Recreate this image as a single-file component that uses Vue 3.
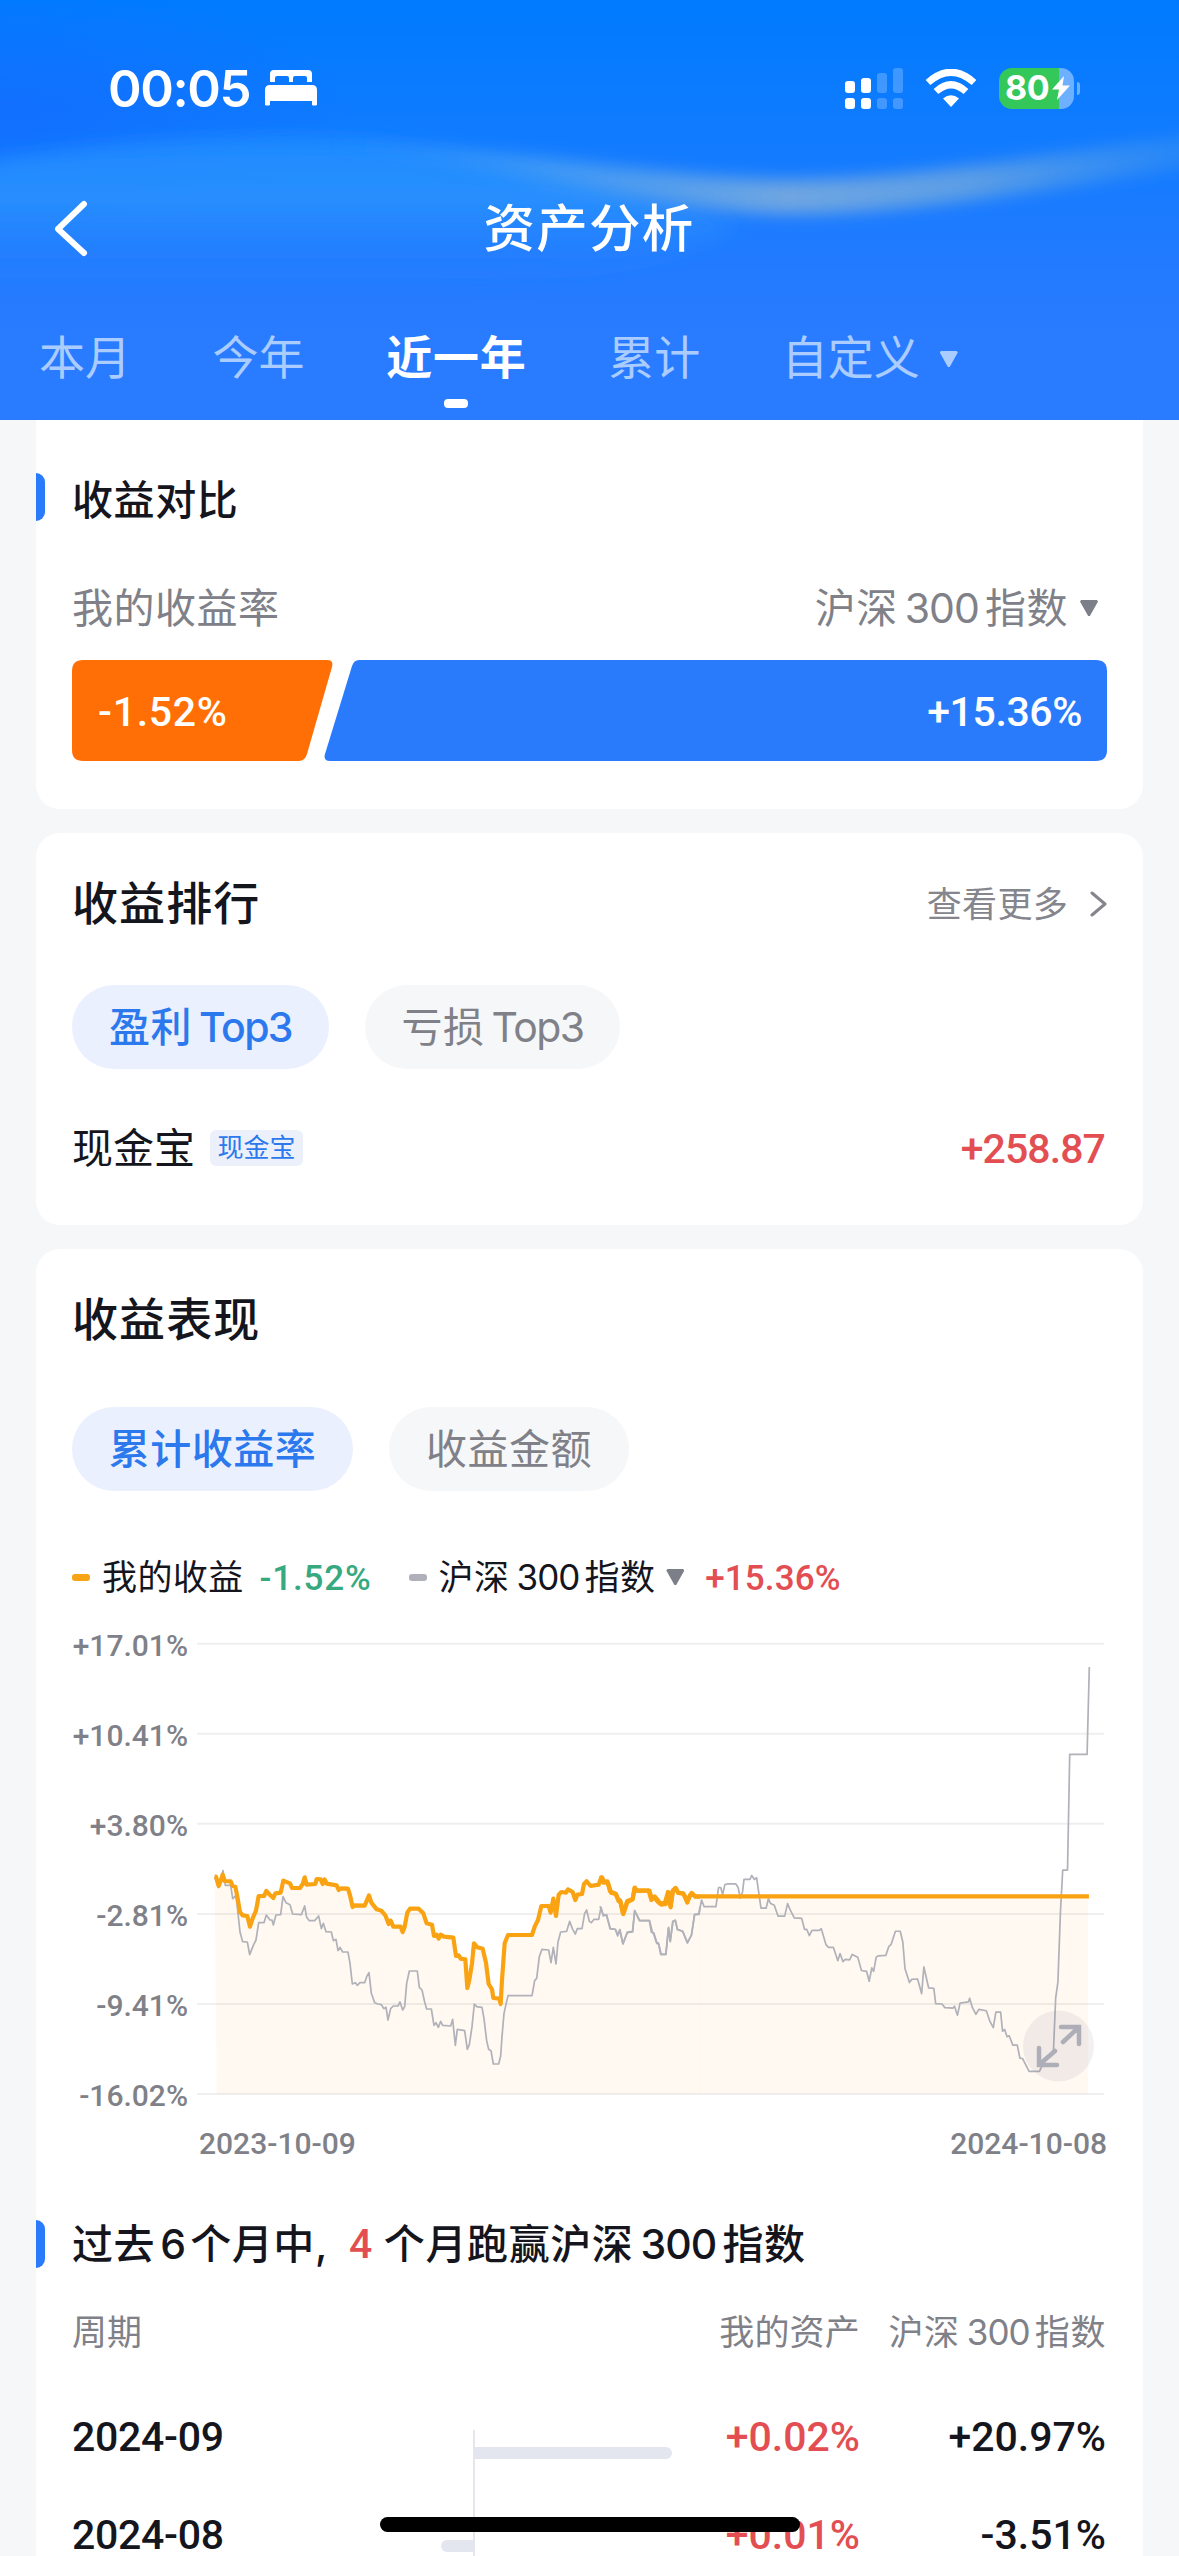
<script setup>
const tabs = [
  { label: '本月' },
  { label: '今年' },
  { label: '近一年', active: true },
  { label: '累计' },
  { label: '自定义', menu: true },
]

const gridRows = ['+17.01%', '+10.41%', '+3.80%', '-2.81%', '-9.41%', '-16.02%']

// First half of the year, in thirds of a pixel.
const mineEarly =
  '44,290 48,290 56,318 62,302 68,284 74,303 92,304 98,318 106,320 112,350 120,396 128,406 142,408 150,440 158,415 168,392 176,348 192,348 199,333 210,345 220,354 226,340 242,338 250,302 270,310 276,324 300,324 308,312 314,292 320,314 346,312 350,297 362,298 368,312 374,298 380,311 410,316 416,330 424,325 444,326 450,346 458,381 464,376 494,377 507,346 514,368 530,388 544,392 556,406 566,432 572,422 580,440 602,440 608,456 614,440 622,398 630,386 656,386 670,400 680,430 696,434 702,468 710,464 716,476 722,464 732,470 760,473 768,528 776,526 782,536 796,538 802,624 808,600 816,550 822,490 832,502 848,506 858,548 866,612 876,628 880,654 898,656 902,672 906,600 914,490 924,465 996,465 1004,440 1014,420 1024,378 1046,378 1052,398 1060,356 1068,408 1076,344 1084,336 1098,338 1104,328 1118,336 1126,360 1132,344 1146,342 1152,312 1160,304 1172,318 1196,314 1204,292 1210,308 1222,304 1230,334 1248,342 1256,364 1262,366 1270,402 1282,366 1298,358 1304,324 1310,332 1346,332 1354,360 1362,352 1374,366 1384,374 1398,372 1406,338 1412,382 1418,332 1426,324 1434,338 1450,340 1462,368 1470,345 1478,342 1486,350 1500,350'
const indexEarly =
  '44,290 56,322 62,304 69,272 76,316 92,316 98,356 108,346 114,400 120,456 128,485 142,486 149,524 160,496 168,480 176,428 192,428 199,405 210,420 216,420 220,435 228,405 242,404 249,350 258,368 270,374 278,402 304,404 314,378 320,412 328,422 344,422 356,408 364,446 370,430 378,455 394,456 400,482 408,478 414,512 420,502 428,516 444,516 450,550 457,612 466,608 472,616 480,608 494,608 500,590 507,578 514,640 524,668 534,672 544,674 552,686 558,682 564,720 572,686 580,678 594,678 600,666 608,690 614,680 620,610 628,573 652,573 658,622 666,630 674,666 680,687 694,687 702,736 708,728 715,742 722,724 728,736 752,738 758,718 766,796 772,748 794,752 802,808 808,794 816,740 823,672 830,680 846,682 852,716 860,782 866,808 873,812 880,852 896,852 902,828 906,770 912,700 924,647 996,647 1004,602 1010,595 1018,530 1026,508 1046,510 1053,548 1060,502 1068,552 1074,486 1082,456 1100,454 1109,424 1118,448 1126,462 1132,446 1146,446 1154,400 1160,390 1168,424 1174,428 1182,418 1196,418 1203,382 1210,408 1220,404 1230,446 1246,448 1253,468 1259,450 1269,492 1282,458 1298,456 1304,392 1318,422 1348,422 1354,456 1360,460 1370,490 1376,492 1382,523 1398,523 1405,444 1411,485 1418,424 1426,422 1432,448 1448,454 1462,488 1474,466 1484,404 1497,403 1500,380'

// Second half: 2.708 units across and 2.24 units down per pixel.
const mineLate =
  '0,848 6,846 12,856 22,858 30,880 42,882 50,896 54,896 62,926 74,898 88,894 94,868 100,875 134,875 140,892 148,888 164,904 176,902 184,878 191,910 198,874 206,870 212,880 226,882 237,898 248,880 258,888 1324,888'
const indexLate =
  '0,910 8,928 18,932 28,960 42,962 48,974 54,962 62,994 74,968 88,966 94,920 108,942 134,942 142,968 146,970 154,992 158,992 166,1018 178,1018 186,957 190,988 198,944 204,941 210,962 224,966 237,992 248,974 256,928 268,927 275,896 282,911 314,911 321,868 327,868 332,884 338,862 344,860 368,860 374,868 380,892 386,878 390,850 406,850 411,841 418,850 424,846 436,914 450,914 456,893 462,904 472,908 482,932 500,932 508,904 516,920 526,936 546,937 554,962 560,962 567,976 574,964 594,964 599,960 612,996 618,1002 632,1002 644,1032 650,1016 658,1034 664,1029 676,1030 683,1018 698,1024 708,1054 722,1056 729,1078 736,1048 741,1056 748,1024 754,1021 774,1020 782,1000 788,996 800,966 813,966 820,990 826,1050 838,1081 844,1074 860,1073 871,1106 877,1046 890,1093 904,1094 909,1128 926,1129 934,1137 956,1138 960,1134 968,1154 975,1127 998,1124 1001,1116 1008,1136 1018,1152 1026,1141 1046,1144 1056,1168 1065,1182 1072,1147 1085,1147 1090,1190 1096,1186 1102,1202 1108,1200 1118,1221 1130,1221 1137,1250 1144,1251 1162,1280 1190,1280 1200,1262 1228,1232 1234,1115 1240,1080 1247,920 1253,829 1266,829 1272,570 1319,570 1325,374'

const months = [
  { period: '2024-09', mine: '+0.02%', index: '+20.97%', side: 'gain', width: 197 },
  { period: '2024-08', mine: '+0.01%', index: '-3.51%', side: 'loss', width: 34 },
]
</script>

<template>
  <div class="screen">
    <header class="hero">
      <svg class="hero-art" viewBox="0 0 1179 420" preserveAspectRatio="none">
        <defs>
          <linearGradient id="base" x1="0" y1="0" x2="0" y2="1">
            <stop offset="0" stop-color="#007bff" />
            <stop offset="0.35" stop-color="#127bff" />
            <stop offset="0.65" stop-color="#237bff" />
            <stop offset="0.8" stop-color="#297bff" />
            <stop offset="1" stop-color="#297bff" />
          </linearGradient>
          <radialGradient id="corner">
            <stop offset="0" stop-color="#126eff" stop-opacity="0.9" />
            <stop offset="1" stop-color="#126eff" stop-opacity="0" />
          </radialGradient>
          <linearGradient id="sheet" x1="0" y1="0" x2="0" y2="1">
            <stop offset="0" stop-color="#2493ff" stop-opacity="0.65" />
            <stop offset="0.4" stop-color="#2d96fd" stop-opacity="0.75" />
            <stop offset="1" stop-color="#277dff" stop-opacity="0" />
          </linearGradient>
          <linearGradient id="ribbon" x1="0" y1="0" x2="1" y2="0">
            <stop offset="0" stop-color="#3a9bf8" stop-opacity="0" />
            <stop offset="0.25" stop-color="#4a9ff3" stop-opacity="0.8" />
            <stop offset="0.5" stop-color="#70a6e1" />
            <stop offset="0.7" stop-color="#5c9ee6" />
            <stop offset="1" stop-color="#3592f2" stop-opacity="0.3" />
          </linearGradient>
          <filter id="soft" x="-10%" y="-30%" width="120%" height="160%"><feGaussianBlur stdDeviation="8" /></filter>
          <filter id="softer" x="-10%" y="-30%" width="120%" height="160%"><feGaussianBlur stdDeviation="9" /></filter>
        </defs>
        <rect width="1179" height="420" fill="url(#base)" />
        <ellipse cx="20" cy="110" rx="330" ry="120" fill="url(#corner)" />
        <path d="M-40 165 Q180 128 370 140 Q560 165 740 225 Q640 290 400 290 L-40 290Z" fill="url(#sheet)" filter="url(#softer)" />
        <path d="M330 140 C480 142 640 176 780 180 C920 180 1060 152 1240 128 L1240 158 C1060 188 900 216 780 214 C640 210 520 166 330 146Z" fill="url(#ribbon)" filter="url(#soft)" />
      </svg>

      <div class="status">
        <div class="clock">
          <span class="time">00:05</span>
          <svg width="52" height="36" viewBox="0 0 52 36" fill="#fff">
            <path d="M5 12V4Q5 0 9 0H43Q47 0 47 4V12H42V8Q42 6 40 6H30Q28 6 28 8V12H24V8Q24 6 22 6H12Q10 6 10 8V12Z" />
            <path d="M0 35V20Q0 15 5 15H47Q52 15 52 20V35Q49 36 47 35V31H5V35Q2 36 0 35Z" />
          </svg>
        </div>
        <div class="signals">
          <svg width="58" height="41" viewBox="0 0 58 41" fill="#fff">
            <rect y="13" width="10" height="12" rx="3" /><rect y="30" width="10" height="11" rx="3" />
            <rect x="16" y="10" width="10" height="15" rx="3" /><rect x="16" y="30" width="10" height="11" rx="3" />
            <g opacity="0.22">
              <rect x="32" y="5" width="10" height="20" rx="3" /><rect x="32" y="30" width="10" height="11" rx="3" />
              <rect x="48" y="0" width="10" height="25" rx="3" /><rect x="48" y="30" width="10" height="11" rx="3" />
            </g>
          </svg>
          <svg width="52" height="38" viewBox="0 0 52 38">
            <g fill="none" stroke="#fff" stroke-width="7">
              <path d="M3 13.5Q26 -7 49 13.5" /><path d="M11 22.5Q26 9 41 22.5" />
            </g>
            <path d="M18 29.5Q26 23 34 29.5L26 38Z" fill="#fff" />
          </svg>
          <div class="battery">
            <div class="cell">
              <span class="level">80</span>
              <svg width="18" height="24" viewBox="0 0 18 24"><path d="M12 0L0 13.5H7L5 24L18 9.5H10.5Z" fill="#fff" /></svg>
            </div>
            <i class="nub"></i>
          </div>
        </div>
      </div>

      <div class="navbar">
        <svg width="38" height="58" viewBox="0 0 38 58"><path d="M32 4L6 29L32 53" fill="none" stroke="#fff" stroke-width="6" stroke-linecap="round" stroke-linejoin="round" /></svg>
        <h1>资产分析</h1>
        <span class="nav-end"></span>
      </div>

      <nav class="tabs">
        <div v-for="t in tabs" :key="t.label" class="tab" :class="{ active: t.active }">
          <span>{{ t.label }}</span>
          <i v-if="t.menu" class="tri pale"></i>
        </div>
      </nav>
    </header>

    <main>
      <section class="card compare">
        <h3 class="marked"><span class="drop">收益对比</span></h3>
        <div class="compare-labels">
          <span>我的收益率</span>
          <span class="pick">沪深<b class="n">300</b>指数<i class="tri"></i></span>
        </div>
        <div class="versus">
          <svg class="versus-art" viewBox="0 0 1035 101">
            <path d="M11 0H255Q262 0 260 7L235 94Q233 101 227 101H11Q0 101 0 90V11Q0 0 11 0Z" fill="#ff6f05" />
            <path d="M287 0H1024Q1035 0 1035 11V90Q1035 101 1024 101H258Q251 101 253 94L280 6Q282 0 287 0Z" fill="#297bfb" />
          </svg>
          <span class="num">-1.52%</span>
          <span class="num tight">+15.36%</span>
        </div>
      </section>

      <section class="card ranking">
        <div class="title-row">
          <h2>收益排行</h2>
          <span class="more">查看更多
            <svg width="17" height="26" viewBox="0 0 17 26"><path d="M2 2L15 13L2 24" fill="none" stroke="#84858d" stroke-width="3" stroke-linecap="round" stroke-linejoin="round" /></svg>
          </span>
        </div>
        <div class="chips">
          <span class="chip on w257">盈利<b class="t">Top3</b></span>
          <span class="chip w255">亏损<b class="t">Top3</b></span>
        </div>
        <div class="holding">
          <span class="name">现金宝</span><span class="tag">现金宝</span>
          <span class="num amount up">+258.87</span>
        </div>
      </section>

      <section class="card performance">
        <h2>收益表现</h2>
        <div class="chips">
          <span class="chip on w280">累计收益率</span>
          <span class="chip w240">收益金额</span>
        </div>
        <div class="legend">
          <i class="dash gold"></i><span class="lg">我的收益</span><span class="num down l1">-1.52%</span>
          <i class="dash grey"></i><span class="lg">沪深<b class="n">300</b>指数</span><i class="tri"></i><span class="num up l2">+15.36%</span>
        </div>
        <div class="chart">
          <div class="y-axis num"><span v-for="g in gridRows" :key="g">{{ g }}</span></div>
          <svg class="plot" width="908" height="454" viewBox="197 1642 908 454">
            <path d="M197 1643.7H1104M197 1733.7H1104M197 1823.7H1104M197 1914H1104M197 2004H1104M197 2094H1104" stroke="#efeff1" stroke-width="2" />
            <g transform="translate(200 1780) scale(0.33333)">
              <polygon :points="'50,942 ' + mineEarly + ' 1500,942'" class="area" />
              <polyline :points="indexEarly" class="index" />
              <polyline :points="mineEarly" class="mine" />
            </g>
            <g transform="translate(600 1500) scale(0.36928 0.44643)">
              <polygon :points="'270,1330 270,888 1322,888 1322,1330'" class="area" />
              <polyline :points="indexLate" class="index" />
              <polyline :points="mineLate" class="mine" />
            </g>
            <circle cx="1058.5" cy="2046" r="35.5" fill="#84707c" fill-opacity="0.1" />
            <path d="M1061 2027H1079V2044M1078 2028L1063 2042M1039 2048V2065H1057M1040 2064L1055 2051" fill="none" stroke="#adaeb7" stroke-width="4.5" stroke-linecap="round" />
          </svg>
        </div>
        <div class="dates num"><span>2023-10-09</span><span>2024-10-08</span></div>

        <h3 class="marked">过去<b class="n six">6</b>个月中<span class="comma">,</span><b class="num up four">4</b>个月跑赢沪深<b class="n">300</b>指数</h3>
        <div class="table">
          <div class="row head"><span>周期</span><span class="c2">我的资产</span><span class="c3">沪深<b class="n">300</b>指数</span></div>
          <div v-for="m in months" :key="m.period" class="row num">
            <span class="c0">{{ m.period }}</span>
            <span class="meter"><i :class="m.side" :style="{ width: m.width + 'px' }"></i></span>
            <span class="c2 up">{{ m.mine }}</span>
            <span class="c3">{{ m.index }}</span>
          </div>
        </div>
      </section>
    </main>
    <div class="home"></div>
  </div>
</template>

<style>
body { overflow: hidden; }
</style>

<style scoped>
* { box-sizing: border-box; margin: 0; }
.screen { position: relative; width: 1179px; height: 2556px; overflow: hidden; background: #f6f7f9; color: #14151d; font-family: Inter, "Noto Sans CJK SC", sans-serif; font-size: 41px; line-height: 1; white-space: nowrap; }
i { font-style: normal; }
b { font-weight: inherit; }
.num { font-family: Roboto, "Liberation Sans", sans-serif; font-weight: 500; }
.n { margin: 0 6px 0 7px; letter-spacing: -0.9px; }
.up { color: #e24e52; }
.down { color: #37a981; }
.tri { width: 18px; height: 16px; background: #7d7f88; clip-path: polygon(6% 0, 94% 0, 100% 10%, 55% 100%, 45% 100%, 0 10%); }
.tri.pale { background: #abccff; margin-left: 20px; }

.hero { position: relative; height: 420px; color: #fff; }
.hero-art { position: absolute; inset: 0; width: 1179px; height: 420px; }
.status, .navbar, .tabs { position: relative; display: flex; align-items: center; }
.status { height: 176px; padding: 0 99px 0 108px; justify-content: space-between; }
.clock, .signals { display: flex; align-items: center; }
.time { width: 157px; font-size: 51px; font-weight: 600; letter-spacing: -1.4px; }
.signals { gap: 22px; }
.battery { display: flex; align-items: center; gap: 3px; }
.cell { width: 75px; height: 41px; border-radius: 13px; padding-left: 6px; display: flex; align-items: center; background: linear-gradient(90deg, #34c759 60px, #6cb0ff 60px); }
.level { width: 47px; font-size: 34px; font-weight: 700; letter-spacing: -0.5px; }
.nub { width: 3px; height: 13px; border-radius: 0 4px 4px 0; background: #6cb0ff; }
.navbar { height: 106px; justify-content: space-between; padding: 0 53px 0 52px; }
.nav-end { width: 38px; }
h1 { font-size: 51.5px; font-weight: 500; letter-spacing: 1.2px; }
.tabs { height: 138px; padding: 12px 0 0 39px; gap: 81.6px; align-items: flex-start; }
.tab { position: relative; height: 126px; display: flex; align-items: flex-start; font-size: 46px; line-height: 126px; color: #abccff; }
.tab .tri { margin-top: 57px; }
.tab.active { color: #fff; font-weight: 700; letter-spacing: 0.8px; }
.tab.active::after { content: ""; position: absolute; left: 50%; bottom: 12px; width: 24px; height: 9px; margin-left: -12px; border-radius: 4px; background: #fff; }

main { padding: 0 36px; display: flex; flex-direction: column; gap: 24px; }
.card { background: #fff; border-radius: 24px; padding: 0 36px; }
.compare { height: 389px; border-radius: 0 0 24px 24px; padding-top: 53px; }
.marked { display: flex; align-items: center; height: 48px; margin-left: -36px; font-size: 41px; font-weight: 500; letter-spacing: 0.6px; }
.marked::before { content: ""; width: 9px; height: 48px; margin-right: 27px; border-radius: 0 9px 9px 0; background: #297bfb; }
.drop { padding-top: 6px; }
.compare-labels { display: flex; justify-content: space-between; height: 48px; align-items: center; margin-top: 63px; padding-right: 9px; color: #808188; letter-spacing: 0.5px; }
.pick { display: flex; align-items: center; }
.pick .tri { margin-left: 12px; }
.versus { position: relative; display: flex; align-items: center; justify-content: space-between; height: 101px; margin-top: 28px; padding: 3px 26px 0; color: #fff; font-size: 41px; letter-spacing: 0.7px; }
.versus-art { position: absolute; left: 0; top: 0; width: 1035px; height: 101px; }
.versus .num { position: relative; }
.versus .tight { letter-spacing: -0.4px; margin-right: -1px; }

h2 { font-size: 46px; font-weight: 500; letter-spacing: 1.1px; }
.ranking { height: 392px; padding-top: 46px; }
.title-row { display: flex; justify-content: space-between; align-items: center; height: 48px; }
.more { display: flex; align-items: center; gap: 22px; padding-top: 2px; font-size: 35px; color: #84858d; letter-spacing: 0.3px; }
.chips { display: flex; gap: 36px; }
.ranking .chips { margin-top: 58px; }
.chip { display: flex; align-items: center; justify-content: center; height: 84px; border-radius: 42px; background: #f6f7f9; color: #808188; letter-spacing: 0.5px; }
.chip.on { background: #ebf0fe; color: #2c79ee; font-weight: 500; }
.t { margin-left: 7px; letter-spacing: -1.6px; }
.w257 { width: 257px; } .w255 { width: 255px; } .w280 { width: 281px; } .w240 { width: 240px; }
.holding { display: flex; align-items: center; height: 48px; margin-top: 55px; }
.name { width: 138px; }
.tag { width: 93px; height: 36px; line-height: 36px; text-align: center; border-radius: 6px; background: #ebf0fb; color: #2c79ee; font-size: 26px; }
.amount { margin-left: auto; letter-spacing: -0.9px; margin-right: 2px; padding-top: 2px; }

.performance { height: 1400px; padding-top: 46px; }
.performance h2 { height: 48px; line-height: 48px; }
.performance .chips { margin-top: 64px; }
.legend { display: flex; align-items: center; height: 40px; margin-top: 66px; font-size: 35px; }
.dash { width: 18px; height: 7px; border-radius: 3px; }
.gold { background: #f7a516; }
.grey { background: #b0b0bb; }
.lg { margin-left: 12px; letter-spacing: 0.4px; }
.l1 { margin-left: 16px; width: 149px; letter-spacing: 0.8px; padding-top: 3px; }
.legend .tri { margin-left: 11px; }
.l2 { margin-left: 21px; letter-spacing: 0.1px; padding-top: 3px; }
.legend .n { margin: 0 5px 0 7px; }
.chart { display: flex; margin-top: 45px; height: 454px; }
.y-axis { width: 125px; padding-right: 9px; display: flex; flex-direction: column; align-items: flex-end; justify-content: space-between; margin: -12px 0 -16px; font-size: 30px; line-height: 32px; color: #808188; }
.plot { flex: none; }
.area { fill: #f9a11b; fill-opacity: 0.06; }
.index, .mine { fill: none; vector-effect: non-scaling-stroke; stroke-linejoin: round; }
.index { stroke: #b0b1b9; stroke-width: 1.7px; }
.mine { stroke: #f9a313; stroke-width: 4.2px; }
.dates { display: flex; justify-content: space-between; height: 32px; margin: 32px 0 0 127px; line-height: 32px; font-size: 30px; color: #808188; }
.performance .marked { margin-top: 60px; padding-top: 0; }
.marked .six { margin: 0 5px 0 5px; }
.comma { width: 23px; }
.four { margin: 0 11px 0 11px; }
.row { display: flex; align-items: center; height: 98px; }
.row.head { height: 48px; margin-top: 40px; margin-bottom: 32px; font-size: 35px; color: #808188; }
.row > span:first-child { width: 401px; letter-spacing: -0.3px; }
.row.head > span:first-child { width: 601px; letter-spacing: 0; }
.c2 { width: 187px; text-align: right; }
.c3 { width: 246px; text-align: right; }
.row.head .c2 { letter-spacing: 0.2px; }
.row.head .c3 { letter-spacing: 0.6px; }
.head .n { margin: 0 5px 0 7px; }
.meter { position: relative; width: 200px; height: 98px; border-left: 2px solid #e4e5ee; align-self: flex-start; margin-top: 42px; }
.meter i { position: absolute; height: 12px; background: #e3e6ee; }
.meter .gain { left: 0; top: 17px; border-radius: 0 6px 6px 0; }
.meter .loss { right: 100%; top: 12px; border-radius: 6px 0 0 6px; }
.home { position: absolute; left: 380px; bottom: 24px; width: 420px; height: 15px; border-radius: 8px; background: #000; }
</style>
